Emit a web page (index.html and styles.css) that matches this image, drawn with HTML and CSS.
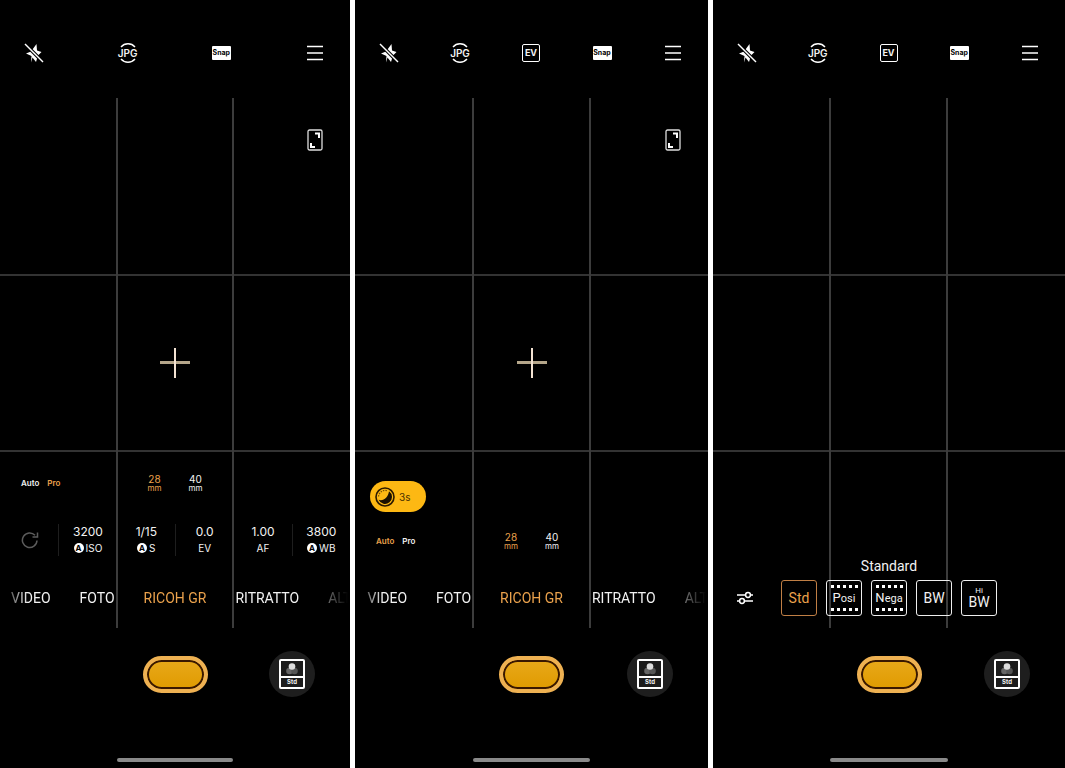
FILE: index.html
```html
<!DOCTYPE html>
<html lang="it">
<head>
  <meta charset="utf-8" />
  <meta name="viewport" content="width=device-width, initial-scale=1.0" />
  <title>RICOH GR</title>
  <link rel="stylesheet" href="styles.css">
</head>

<body>
  <!-- shared icons -->
  <svg class="sprite" aria-hidden="true">
    <symbol id="flash-off" viewBox="0 0 20 20">
      <path d="M12.500 1 13 7.500 17.500 9 14 12.500 12 19 8.500 14.500 7 19.500 7.500 13 2 10.500 7 8.500Z" fill="#fff" />
      <path d="M1 1 19 19" stroke="#000" stroke-width="3.600" />
      <path d="M1 1 19 19" stroke="#fff" stroke-width="1.500" />
    </symbol>
    <symbol id="jpg" viewBox="0 0 22 22">
      <path d="M4 5A9.200 9.200 0 0 1 18 5M4 17A9.200 9.200 0 0 0 18 17" fill="none" stroke="#fff" stroke-width="1.400" />
    </symbol>
    <symbol id="menu" viewBox="0 0 16 16">
      <path d="M0 1.500H16M0 8H16M0 14.500H16" stroke="#fff" stroke-width="1.500" />
    </symbol>
    <symbol id="ratio" viewBox="0 0 16 22">
      <rect x="1" y="1" width="14" height="20" rx="1.500" fill="none" stroke="#ddd" stroke-width="1.300" />
      <path d="M8 4.500H12V9M4 14V18H8" fill="none" stroke="#fff" stroke-width="2" />
    </symbol>
    <symbol id="cross" viewBox="0 0 30 30">
      <path d="M0 14.500H30" stroke="#b5a68a" stroke-width="3" />
      <path d="M15 0V30" stroke="#f3e3d3" stroke-width="2" />
    </symbol>
    <symbol id="film" viewBox="0 0 26 30">
      <rect x="1" y="1" width="24" height="28" rx="1" fill="#1c1c1c" stroke="#fff" stroke-width="2" />
      <path d="M1 18H25" stroke="#fff" stroke-width="2" />
      <circle cx="10.500" cy="12" r="3.300" fill="#666" />
      <circle cx="15.500" cy="12" r="3.300" fill="#555" />
      <circle cx="13" cy="7.500" r="3.300" fill="#ddd" />
    </symbol>
  </svg>

  <main class="screens">
    <section class="phone">
      <header class="topbar">
        <button class="icon-btn" aria-label="Flash"><svg width="20" height="20"><use href="#flash-off" /></svg></button>
        <button class="icon-btn stack"><svg width="22" height="22"><use href="#jpg" /></svg><span class="jpg">JPG</span></button>
        <button class="icon-btn"><span class="snap">Snap</span></button>
        <button class="icon-btn" aria-label="Menu"><svg width="16" height="16"><use href="#menu" /></svg></button>
      </header>
      <div class="finder">
        <button class="icon-btn ratio" aria-label="Formato"><svg width="16" height="22"><use href="#ratio" /></svg></button>
        <svg class="cross" width="30" height="30"><use href="#cross" /></svg>
        <div class="controls">
          <div class="lens-row">
            <div class="exposure">
              <button>Auto</button>
              <button class="active">Pro</button>
            </div>
            <div class="lenses">
              <button class="active">28<small>mm</small></button>
              <button>40<small>mm</small></button>
            </div>
          </div>
          <div class="params">
            <button class="reset" aria-label="Ripristina">
              <svg width="18" height="18" viewBox="0 0 18 18" fill="none" stroke="#5c5c5c" stroke-width="1.500"><path d="M16 9.500A7.300 7.300 0 1 1 14 4.200M16.500 1.500V6H11.500" /></svg>
            </button>
            <button>3200<span class="label"><i>A</i>ISO</span></button>
            <button class="plain">1/15<span class="label"><i>A</i>S</span></button>
            <button>0.0<span class="label">EV</span></button>
            <button class="plain">1.00<span class="label">AF</span></button>
            <button>3800<span class="label"><i>A</i>WB</span></button>
          </div>
          <nav class="modes">
            <div class="side before"><button>VIDEO</button><button>FOTO</button></div>
            <button class="active">RICOH GR</button>
            <div class="side"><button>RITRATTO</button><button>ALT</button></div>
          </nav>
        </div>
      </div>
      <footer class="bottom">
        <div class="capture">
          <button class="shutter" aria-label="Scatta"></button>
          <button class="film stack"><svg width="26" height="30"><use href="#film" /></svg><span>Std</span></button>
        </div>
        <div class="home"></div>
      </footer>
    </section>

    <section class="phone">
      <header class="topbar">
        <button class="icon-btn" aria-label="Flash"><svg width="20" height="20"><use href="#flash-off" /></svg></button>
        <button class="icon-btn stack"><svg width="22" height="22"><use href="#jpg" /></svg><span class="jpg">JPG</span></button>
        <button class="icon-btn"><span class="ev">EV</span></button>
        <button class="icon-btn"><span class="snap">Snap</span></button>
        <button class="icon-btn" aria-label="Menu"><svg width="16" height="16"><use href="#menu" /></svg></button>
      </header>
      <div class="finder">
        <button class="icon-btn ratio" aria-label="Formato"><svg width="16" height="22"><use href="#ratio" /></svg></button>
        <svg class="cross" width="30" height="30"><use href="#cross" /></svg>
        <div class="controls">
          <button class="night">
            <svg width="20" height="20" viewBox="0 0 20 20">
              <circle cx="10" cy="10" r="9" fill="none" stroke="#2b1a00" stroke-width="1.600" />
              <path d="M14 4.200A7 7 0 1 1 3.600 12.800C8.500 14.500 13 10.500 14 4.200Z" fill="#1a1000" />
              <path d="M3.500 9.500A6.800 6.800 0 0 1 12 3.600" fill="none" stroke="#7a5200" stroke-width="1.200" stroke-dasharray="1.500 1" />
            </svg>
            3s
          </button>
          <div class="lens-row">
            <div class="exposure">
              <button class="active">Auto</button>
              <button>Pro</button>
            </div>
            <div class="lenses">
              <button class="active">28<small>mm</small></button>
              <button>40<small>mm</small></button>
            </div>
          </div>
          <nav class="modes">
            <div class="side before"><button>VIDEO</button><button>FOTO</button></div>
            <button class="active">RICOH GR</button>
            <div class="side"><button>RITRATTO</button><button>ALT</button></div>
          </nav>
        </div>
      </div>
      <footer class="bottom">
        <div class="capture">
          <button class="shutter" aria-label="Scatta"></button>
          <button class="film stack"><svg width="26" height="30"><use href="#film" /></svg><span>Std</span></button>
        </div>
        <div class="home"></div>
      </footer>
    </section>

    <section class="phone">
      <header class="topbar">
        <button class="icon-btn" aria-label="Flash"><svg width="20" height="20"><use href="#flash-off" /></svg></button>
        <button class="icon-btn stack"><svg width="22" height="22"><use href="#jpg" /></svg><span class="jpg">JPG</span></button>
        <button class="icon-btn"><span class="ev">EV</span></button>
        <button class="icon-btn"><span class="snap">Snap</span></button>
        <button class="icon-btn" aria-label="Menu"><svg width="16" height="16"><use href="#menu" /></svg></button>
      </header>
      <div class="finder">
        <div class="controls looks">
          <p>Standard</p>
          <div class="look-row">
            <button class="icon-btn" aria-label="Regola">
              <svg width="16" height="14" viewBox="0 0 16 14" fill="none" stroke="#fff" stroke-width="1.500"><path d="M0 4H8.500M13.500 4H16M0 10H2.500M7.500 10H16" /><circle cx="11" cy="4" r="2.400" /><circle cx="5" cy="10" r="2.400" /></svg>
            </button>
            <div class="tiles">
              <button class="tile active">Std</button>
              <button class="tile perforated"><span>Posi</span></button>
              <button class="tile perforated"><span>Nega</span></button>
              <button class="tile">BW</button>
              <button class="tile"><small>Hi</small>BW</button>
            </div>
          </div>
        </div>
      </div>
      <footer class="bottom">
        <div class="capture">
          <button class="shutter" aria-label="Scatta"></button>
          <button class="film stack"><svg width="26" height="30"><use href="#film" /></svg><span>Std</span></button>
        </div>
        <div class="home"></div>
      </footer>
    </section>
  </main>
</body>
</html>
```
FILE: styles.css
```css
* {
  box-sizing: border-box;
}

body {
  margin: 0;
  background: #fff;
  color: #f2f2f2;
  font-family: Roboto, "Liberation Sans", sans-serif;
}

button {
  margin: 0;
  padding: 0;
  border: 0;
  background: none;
  color: inherit;
  font: inherit;
}

svg {
  display: block;
}

.sprite {
  display: none;
}

.screens {
  display: grid;
  grid-template-columns: 350fr 353fr 352fr;
  gap: 5px;
  min-height: 100vh;
}

.phone {
  display: flex;
  flex-direction: column;
  min-width: 0;
  background: #000;
}

.active {
  color: #eba24c;
}

.icon-btn {
  display: grid;
  place-items: center;
  width: 28px;
  height: 28px;
}

.stack {
  display: grid;
  place-items: center;
}

.stack > * {
  grid-area: 1 / 1;
}

/* top bar */
.topbar {
  display: flex;
  justify-content: space-between;
  padding: 39px 21px 31px 20px;
  font-family: Inter, sans-serif;
}

.jpg {
  font-size: 10px;
  font-weight: 600;
  line-height: 10px;
}

.snap {
  width: 19px;
  background: #fff;
  color: #000;
  font-size: 7px;
  font-weight: 700;
  line-height: 14px;
  border-radius: 1px;
}

.ev {
  width: 18px;
  border: 1px solid #fff;
  border-radius: 2px;
  font-size: 9px;
  font-weight: 700;
  line-height: 16px;
}

/* viewfinder with the rule-of-thirds lines */
.finder {
  flex: 1;
  display: grid;
  grid-template-columns: minmax(0, 1fr);
  background:
    linear-gradient(#3c3c3c, #3c3c3c) 33.2% 0 / 2px 100% no-repeat,
    linear-gradient(#3c3c3c, #3c3c3c) 66.6% 0 / 2px 100% no-repeat,
    linear-gradient(#333, #333) 0 33.3% / 100% 2px no-repeat,
    linear-gradient(#333, #333) 0 66.6% / 100% 2px no-repeat;
}

.finder > * {
  grid-area: 1 / 1;
}

.ratio {
  place-self: start end;
  margin: 28px 21px;
}

.cross {
  place-self: center;
}

.controls {
  align-self: end;
  padding-bottom: 18px;
}

.lens-row {
  display: grid;
  grid-template-columns: 1fr auto 1fr;
  align-items: center;
  margin-bottom: 36px;
  font-family: Inter, sans-serif;
}

.exposure {
  display: flex;
  gap: 8px;
  padding-left: 21px;
  font-size: 8px;
  font-weight: 600;
}

.lenses {
  display: flex;
  gap: 27px;
  font-size: 10px;
  line-height: 10px;
}

.lenses small {
  display: block;
  font-size: 8px;
  line-height: 8px;
}

.params {
  display: grid;
  grid-template-columns: repeat(6, 1fr);
  margin: -4px 0 30px;
  font: 12px/16px Inter, sans-serif;
}

.params button {
  border-left: 1px solid #1e1e1e;
}

.params .reset,
.params .plain {
  border-color: transparent;
}

.reset {
  display: grid;
  place-items: center;
}

.label {
  display: flex;
  justify-content: center;
  align-items: center;
  gap: 2px;
  font-size: 10px;
}

.label i {
  width: 10px;
  border-radius: 50%;
  background: #fff;
  color: #000;
  font-size: 8px;
  font-style: normal;
  font-weight: 700;
  line-height: 10px;
}

.modes {
  display: grid;
  grid-template-columns: minmax(0, 1fr) auto minmax(0, 1fr);
  gap: 29px;
  font-size: 14px;
  line-height: 24px;
  mask-image: linear-gradient(to right, transparent, #000 28px, #000 calc(100% - 48px), transparent calc(100% - 2px));
}

.side {
  display: flex;
  gap: 29px;
}

.before {
  justify-content: flex-end;
}

.night {
  display: flex;
  align-items: center;
  gap: 4px;
  height: 31px;
  margin: 0 0 20px 15px;
  padding: 0 16px 0 5px;
  border-radius: 16px;
  background: #fdb813;
  color: #4a3000;
  font: 10px Inter, sans-serif;
}

/* film looks */
.looks {
  padding-bottom: 12px;
}

.looks p {
  margin: 0 0 4px;
  font-size: 14px;
  line-height: 20px;
  text-align: center;
}

.look-row {
  display: grid;
  grid-template-columns: 1fr auto 1fr;
  align-items: center;
}

.look-row .icon-btn {
  margin-left: 18px;
}

.tiles {
  display: flex;
  gap: 9px;
}

.tile {
  display: flex;
  flex-direction: column;
  justify-content: center;
  align-items: center;
  width: 36px;
  height: 36px;
  border: 1px solid #eee;
  border-radius: 3px;
  font-size: 14px;
  line-height: 14px;
}

.tile.active {
  border-color: #c07f45;
}

.tile small {
  font-size: 8px;
  line-height: 8px;
}

.perforated {
  justify-content: space-between;
  padding: 4px 3px;
  font-size: 11px;
}

.perforated span::first-letter {
  font-size: 13px;
}

.perforated::before,
.perforated::after {
  content: "";
  width: 27px;
  height: 3px;
  background: repeating-linear-gradient(to right, #fff 0 3px, transparent 3px 6px);
}

/* shutter area */
.bottom {
  display: flex;
  flex-direction: column;
  justify-content: space-between;
  height: 140px;
  padding: 23px 0 6px;
}

.capture {
  display: grid;
  grid-template-columns: 1fr auto 1fr;
  align-items: center;
}

.shutter {
  grid-column: 2;
  width: 65px;
  height: 37px;
  border: 4px solid #eeb152;
  border-radius: 19px;
  background: linear-gradient(#e8a81a, #e09b00);
  box-shadow: inset 0 0 0 2px #3a1800;
}

.film {
  justify-self: end;
  width: 46px;
  height: 46px;
  margin-right: 35px;
  border-radius: 50%;
  background: #1e1e1e;
}

.film span {
  padding-top: 16px;
  font: 700 6px/8px Inter, sans-serif;
}

.home {
  width: 33.3%;
  height: 4px;
  margin: 0 auto;
  border-radius: 2px;
  background: #8a8a8a;
}
```
